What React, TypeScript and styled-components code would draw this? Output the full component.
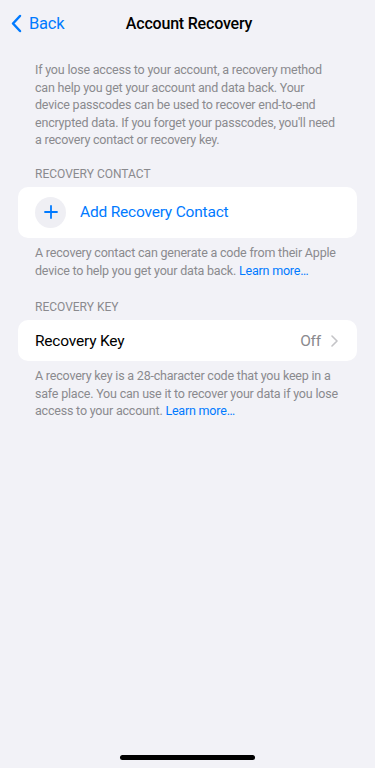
import React from 'react';
import styled, { createGlobalStyle } from 'styled-components';

const Global = createGlobalStyle`
  html, body { margin: 0; padding: 0; background: #f2f2f7; }
  body {
    font-family: Roboto, "Noto Sans", sans-serif;
    -webkit-font-smoothing: antialiased;
  }
`;

const Screen = styled.div`
  width: 375px;
  height: 768px;
  background: #f2f2f7;
  display: flex;
  flex-direction: column;
  overflow: hidden;
`;

const NavBar = styled.div`
  height: 46px;
  display: grid;
  grid-template-columns: 1fr auto 1fr;
  align-items: center;
  padding: 0 8px 0 11px;
`;

const BackButton = styled.div`
  display: flex;
  align-items: center;
  gap: 7px;
  color: #007aff;
  font-size: 16.5px;
  letter-spacing: -0.2px;
`;

const Title = styled.div`
  font-size: 16px;
  font-weight: 500;
  color: #000;
  letter-spacing: -0.2px;
`;

const Content = styled.div`
  flex: 1;
  padding: 15px 18px 0;
  display: flex;
  flex-direction: column;
`;

const Note = styled.p<{ $top?: number }>`
  margin: ${(p) => p.$top ?? 0}px 16px 0 17px;
  font-size: 12.5px;
  line-height: 17.6px;
  color: #8a8a8e;
  letter-spacing: -0.2px;
`;

const Link = styled.span`
  color: #007aff;
`;

const SectionHeader = styled.div<{ $top: number }>`
  margin: ${(p) => p.$top}px 17px 6px;
  font-size: 12px;
  line-height: 14px;
  color: #8a8a8e;
`;

const Card = styled.div<{ $height: number }>`
  height: ${(p) => p.$height}px;
  background: #fff;
  border-radius: 10px;
  display: flex;
  align-items: center;
  padding: 0 19px 0 17px;
`;

const PlusCircle = styled.div`
  width: 31px;
  height: 31px;
  border-radius: 50%;
  background: #efeff4;
  display: flex;
  align-items: center;
  justify-content: center;
  margin-right: 14px;
`;

const ActionLabel = styled.div`
  font-size: 15.5px;
  color: #007aff;
  letter-spacing: -0.2px;
`;

const RowLabel = styled.div`
  flex: 1;
  font-size: 15.5px;
  color: #000;
  letter-spacing: -0.2px;
`;

const RowValue = styled.div`
  display: flex;
  align-items: center;
  gap: 10px;
  font-size: 15.5px;
  color: #8a8a8e;
  letter-spacing: -0.2px;
`;

const HomeBar = styled.div`
  width: 135px;
  height: 5px;
  border-radius: 3px;
  background: #000;
  margin: 0 auto 8px;
`;

export default function App() {
  return (
    <>
      <Global />
      <Screen>
        <NavBar>
          <BackButton>
            <svg width="11" height="19" viewBox="0 0 11 19">
              <path d="M9 2 L2 9.5 L9 17" fill="none" stroke="#007aff" strokeWidth="2.5" strokeLinecap="round" strokeLinejoin="round" />
            </svg>
            Back
          </BackButton>
          <Title>Account Recovery</Title>
          <div />
        </NavBar>
        <Content>
          <Note>
            If you lose access to your account, a recovery method can help you get your account and data back. Your
            device passcodes can be used to recover end-to-end encrypted data. If you forget your passcodes, you'll need
            a recovery contact or recovery key.
          </Note>
          <SectionHeader $top={18}>RECOVERY CONTACT</SectionHeader>
          <Card $height={51}>
            <PlusCircle>
              <svg width="14" height="14" viewBox="0 0 14 14">
                <path d="M7 1 V13 M1 7 H13" stroke="#007aff" strokeWidth="1.8" strokeLinecap="round" />
              </svg>
            </PlusCircle>
            <ActionLabel>Add Recovery Contact</ActionLabel>
          </Card>
          <Note $top={6}>
            A recovery contact can generate a code from their Apple device to help you get your data back.{' '}
            <Link>Learn more…</Link>
          </Note>
          <SectionHeader $top={21}>RECOVERY KEY</SectionHeader>
          <Card $height={41}>
            <RowLabel>Recovery Key</RowLabel>
            <RowValue>
              Off
              <svg width="7" height="12" viewBox="0 0 7 12">
                <path d="M1 1 L6 6 L1 11" fill="none" stroke="#c4c4c7" strokeWidth="1.6" strokeLinecap="round" strokeLinejoin="round" />
              </svg>
            </RowValue>
          </Card>
          <Note $top={6}>
            A recovery key is a 28-character code that you keep in a safe place. You can use it to recover your data if you
            lose access to your account. <Link>Learn more…</Link>
          </Note>
        </Content>
        <HomeBar />
      </Screen>
    </>
  );
}
